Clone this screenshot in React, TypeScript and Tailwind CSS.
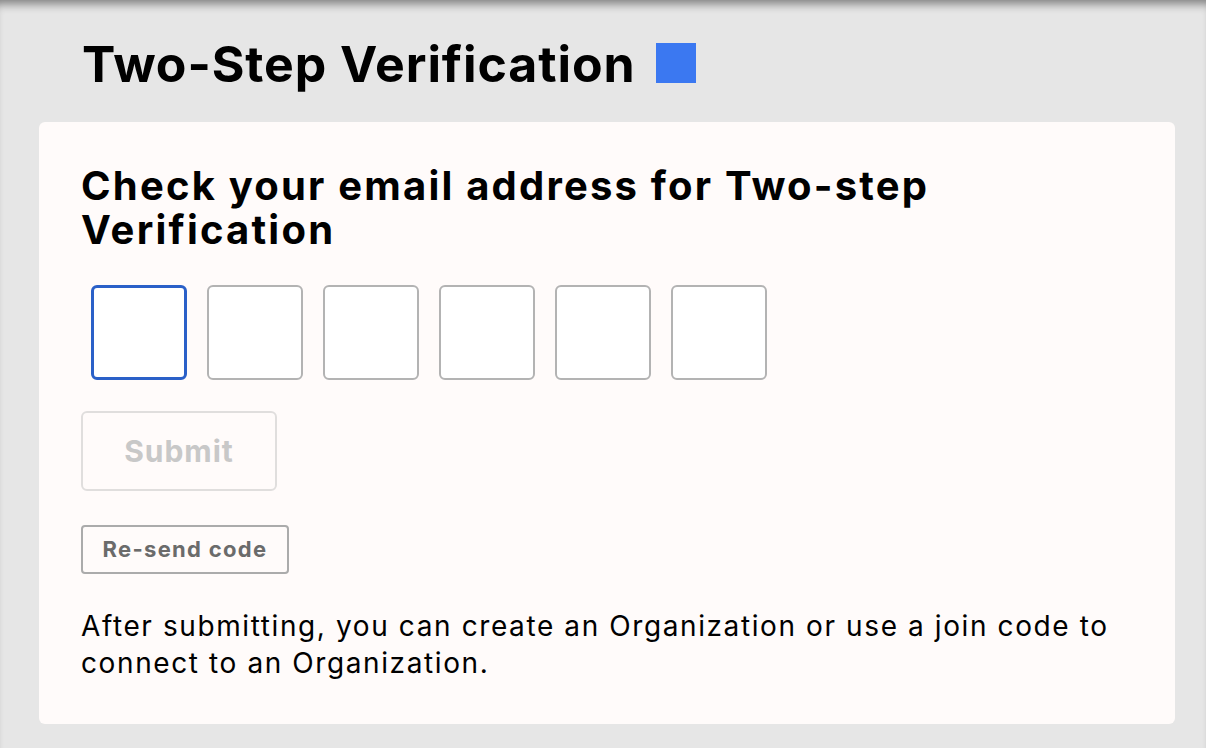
export default function App() {
  const boxes = [0, 1, 2, 3, 4, 5];

  return (
    <div
      className="min-h-[748px] bg-[#e6e6e6] shadow-[inset_0_10px_10px_-6px_rgba(0,0,0,0.45)] pt-[34px] pl-[39px] pr-[31px] pb-[25px]"
      style={{ fontFamily: 'Inter, "Noto Sans", sans-serif' }}
    >
      <div className="flex items-center gap-[20px] pl-[43px] h-[60px]">
        <h1 className="text-[50px] font-bold tracking-[0.9px] text-black leading-none">
          Two-Step Verification
        </h1>
        <span className="w-[40px] h-[40px] bg-[#3b78f1] -mt-[3px]" />
      </div>

      <div className="mt-[28px] bg-[#fffbfa] rounded-[6px] pl-[42px] pr-[40px] pt-[42px] pb-[42px]">
        <h2 className="text-[40px] font-bold leading-[44px] tracking-[2.2px] text-black max-w-[900px]">
          Check your email address for Two-step Verification
        </h2>

        <div className="flex mt-[33px]">
          {boxes.map((i) => (
            <input
              key={i}
              type="text"
              maxLength={1}
              className={`w-[96px] h-[95px] mx-[10px] rounded-[6px] bg-white outline-none text-center text-3xl ${
                i === 0 ? 'border-[3px] border-[#2a60c8]' : 'border-2 border-[#b3b3b3]'
              }`}
            />
          ))}
        </div>

        <button
          disabled
          className="mt-[31px] block w-[196px] h-[80px] rounded-[6px] border-2 border-[#e0dedd] text-[30px] font-bold tracking-[1px] text-[#c8c8c8]"
        >
          Submit
        </button>

        <button className="mt-[34px] block w-[208px] h-[49px] rounded-[4px] border-2 border-[#ababab] text-[22px] font-bold tracking-[1.3px] text-[#6b6b6b]">
          Re-send code
        </button>

        <p className="mt-[34px] text-[28px] leading-[37px] tracking-[1.6px] text-black">
          After submitting, you can create an Organization or use a join code to connect to an
          Organization.
        </p>
      </div>
    </div>
  );
}
